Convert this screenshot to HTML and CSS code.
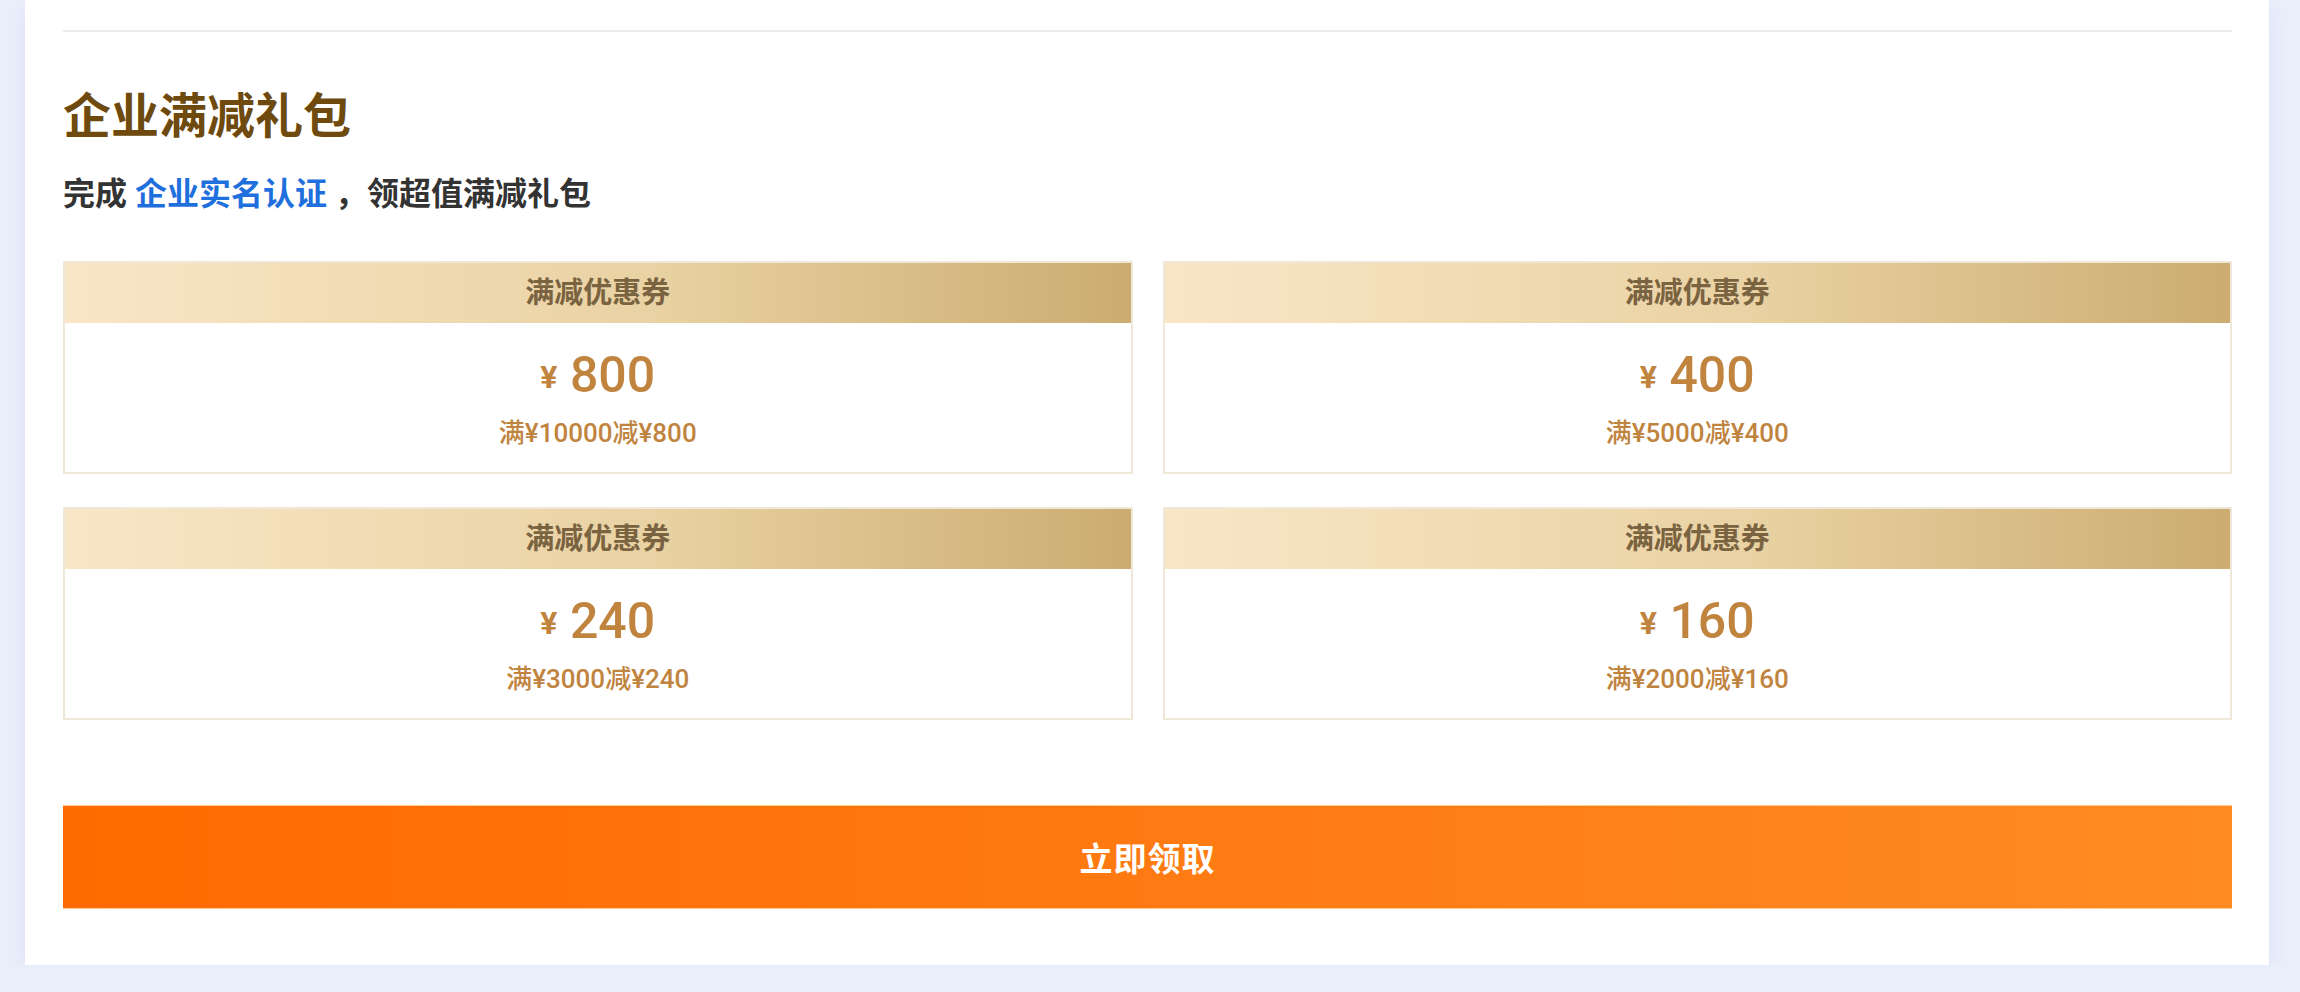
FILE: index.html
```html
<!DOCTYPE html>
<html lang="zh-CN">
<head>
    <meta charset="UTF-8">
    <meta name="viewport" content="width=device-width, initial-scale=1.0">
    <title>企业满减礼包</title>
    <link rel="stylesheet" href="styles.css">
</head>
<body>
    <div class="page">
        <div class="gift-card">
            <div class="divider"></div>

            <h2 class="gift-title">企业满减礼包</h2>
            <p class="gift-desc">完成 <a href="#" class="gift-link">企业实名认证</a> ，领超值满减礼包</p>

            <div class="coupon-grid">
                <div class="coupon">
                    <div class="coupon-head">满减优惠券</div>
                    <div class="coupon-body">
                        <div class="coupon-amount"><span class="yen">¥</span> 800</div>
                        <div class="coupon-rule">满¥10000减¥800</div>
                    </div>
                </div>
                <div class="coupon">
                    <div class="coupon-head">满减优惠券</div>
                    <div class="coupon-body">
                        <div class="coupon-amount"><span class="yen">¥</span> 400</div>
                        <div class="coupon-rule">满¥5000减¥400</div>
                    </div>
                </div>
                <div class="coupon">
                    <div class="coupon-head">满减优惠券</div>
                    <div class="coupon-body">
                        <div class="coupon-amount"><span class="yen">¥</span> 240</div>
                        <div class="coupon-rule">满¥3000减¥240</div>
                    </div>
                </div>
                <div class="coupon">
                    <div class="coupon-head">满减优惠券</div>
                    <div class="coupon-body">
                        <div class="coupon-amount"><span class="yen">¥</span> 160</div>
                        <div class="coupon-rule">满¥2000减¥160</div>
                    </div>
                </div>
            </div>

            <button type="button" class="claim-btn">立即领取</button>
        </div>
    </div>
</body>
</html>
```

FILE: styles.css
```css
body {
    margin: 0;
    background-color: #e9eefb;
    font-family: Roboto, "Noto Sans CJK SC", sans-serif;
}
.page {
    padding: 0 31px 0 25px;
}
.gift-card {
    background: white;
    padding: 30px 37px 56px 38px;
    box-shadow: 0 8px 18px rgba(70, 100, 170, 0.08);
}
.divider {
    height: 2px;
    background-color: #ececec;
}
.gift-title {
    margin: 53px 0 0;
    font-size: 48px;
    line-height: 64px;
    font-weight: bold;
    color: #6e4a0e;
}
.gift-desc {
    margin: 23px 0 0;
    font-size: 32px;
    line-height: 44px;
    font-weight: bold;
    color: #333333;
}
.gift-link {
    color: #1f6fdc;
    text-decoration: none;
}
.coupon-grid {
    display: grid;
    grid-template-columns: 1fr 1fr;
    column-gap: 30px;
    row-gap: 33px;
    margin-top: 45px;
}
.coupon {
    border: 2px solid #efe7d7;
    background: white;
}
.coupon-head {
    height: 60px;
    line-height: 60px;
    text-align: center;
    font-size: 29px;
    font-weight: bold;
    color: #7a6340;
    background: linear-gradient(90deg, #f9e6c7 0%, #e9d2a3 55%, #ccac70 100%);
}
.coupon-body {
    padding: 22px 0;
    text-align: center;
    color: #c0843f;
}
.coupon-amount {
    font-size: 50px;
    line-height: 60px;
    font-weight: 500;
}
.yen {
    font-size: 32px;
    font-weight: bold;
    vertical-align: 4px;
}
.coupon-rule {
    margin-top: 9px;
    font-size: 26px;
    line-height: 34px;
    font-weight: 500;
}
.claim-btn {
    display: block;
    width: 100%;
    height: 104px;
    margin-top: 85px;
    border: none;
    border-top: 1px solid #ffc98f;
    border-bottom: 1px solid #ffc98f;
    background: linear-gradient(90deg, #ff6a00 0%, #ff7a12 50%, #ff8b24 100%);
    color: white;
    font-family: "Noto Sans CJK SC", sans-serif;
    font-size: 33px;
    font-weight: bold;
    letter-spacing: 1px;
    cursor: pointer;
}
```
